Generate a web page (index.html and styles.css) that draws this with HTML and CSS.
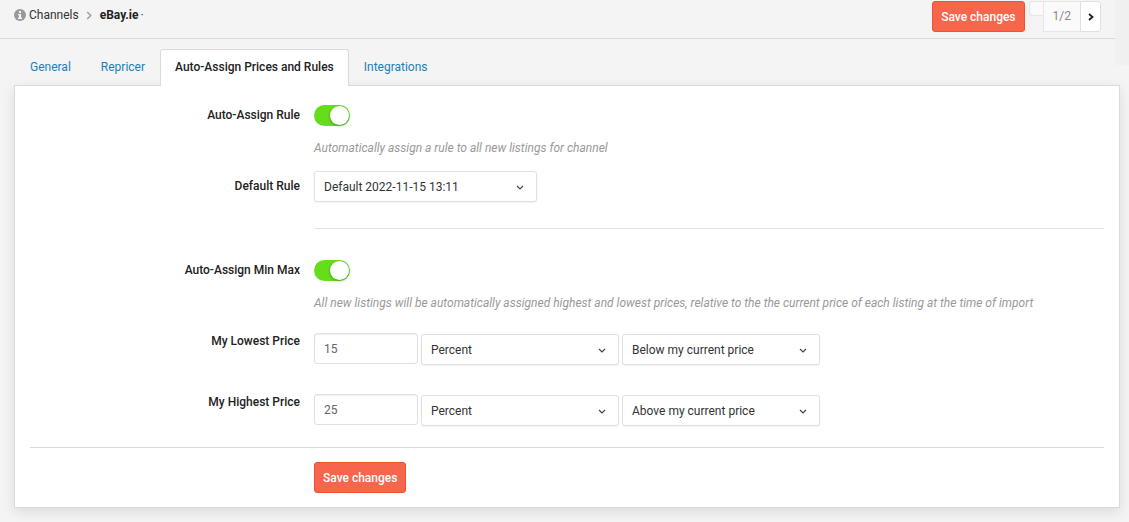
FILE: index.html
```html
<!DOCTYPE html>
<html lang="en">
<head>
  <meta charset="UTF-8">
  <meta name="viewport" content="width=device-width, initial-scale=1">
  <title>eBay.ie - Channels</title>
  <link rel="stylesheet" href="styles.css">
</head>
<body>

  <header class="topbar">
    <nav class="breadcrumb" aria-label="Breadcrumb">
      <svg class="info-icon" viewBox="0 0 12 12" aria-hidden="true">
        <circle cx="6" cy="6" r="6" fill="#999"/>
        <path d="M5 2h2v2H5zM4 5h3v3.500h1V10H4V8.500h1V6.200H4z" fill="#f4f4f4"/>
      </svg>
      <a href="#">Channels</a>
      <svg class="crumb-arrow" viewBox="0 0 6 10" aria-hidden="true">
        <path d="M1 1l4 4-4 4" fill="none" stroke="#999" stroke-width="1.500"/>
      </svg>
      <strong>eBay.ie</strong>
      <span class="dot">·</span>
    </nav>

    <div class="actions">
      <button class="btn" type="submit" form="settings">Save changes</button>
      <div class="pager">
        <button class="pager-prev" type="button" aria-label="Previous" disabled></button>
        <span class="pager-count">1/2</span>
        <button class="pager-next" type="button" aria-label="Next">
          <svg viewBox="0 0 6 8" aria-hidden="true">
            <path d="M1 1l3.500 3L1 7" fill="none" stroke="#222" stroke-width="1.800"/>
          </svg>
        </button>
      </div>
    </div>
    <div class="edge"></div>
  </header>

  <nav class="tabs">
    <a href="#">General</a>
    <a href="#">Repricer</a>
    <a class="active" href="#">Auto-Assign Prices and Rules</a>
    <a href="#">Integrations</a>
  </nav>

  <form class="panel" id="settings">

    <div class="row">
      <label for="assignRule">Auto-Assign Rule</label>
      <div>
        <input class="toggle" type="checkbox" id="assignRule" checked>
        <p class="hint">Automatically assign a rule to all new listings for channel</p>
      </div>
    </div>

    <div class="row row-rule">
      <label for="defaultRule">Default Rule</label>
      <div class="controls">
        <div class="select select-wide">
          <select id="defaultRule">
            <option>Default 2022-11-15 13:11</option>
          </select>
          <svg viewBox="0 0 8 6" aria-hidden="true"><path d="M1 1l3 3 3-3"/></svg>
        </div>
      </div>
    </div>

    <div class="row">
      <hr class="divider">
    </div>

    <div class="row">
      <label for="assignMinMax">Auto-Assign Min Max</label>
      <div>
        <input class="toggle" type="checkbox" id="assignMinMax" checked>
        <p class="hint">All new listings will be automatically assigned highest and lowest prices, relative to the the current price of each listing at the time of import</p>
      </div>
    </div>

    <div class="prices">
      <div class="row">
        <label for="lowest">My Lowest Price</label>
        <div class="controls">
          <input class="number" type="text" id="lowest" value="15">
          <div class="select">
            <select aria-label="Lowest price unit">
              <option>Percent</option>
            </select>
            <svg viewBox="0 0 8 6" aria-hidden="true"><path d="M1 1l3 3 3-3"/></svg>
          </div>
          <div class="select">
            <select aria-label="Lowest price direction">
              <option>Below my current price</option>
            </select>
            <svg viewBox="0 0 8 6" aria-hidden="true"><path d="M1 1l3 3 3-3"/></svg>
          </div>
        </div>
      </div>

      <div class="row">
        <label for="highest">My Highest Price</label>
        <div class="controls">
          <input class="number" type="text" id="highest" value="25">
          <div class="select">
            <select aria-label="Highest price unit">
              <option>Percent</option>
            </select>
            <svg viewBox="0 0 8 6" aria-hidden="true"><path d="M1 1l3 3 3-3"/></svg>
          </div>
          <div class="select">
            <select aria-label="Highest price direction">
              <option>Above my current price</option>
            </select>
            <svg viewBox="0 0 8 6" aria-hidden="true"><path d="M1 1l3 3 3-3"/></svg>
          </div>
        </div>
      </div>
    </div>

    <div class="row footer">
      <button class="btn" type="submit">Save changes</button>
    </div>

  </form>

</body>
</html>
```

FILE: styles.css
```css
* { box-sizing: border-box; }
body {
  margin: 0;
  background: #f4f4f4;
  color: #333;
  font-family: Roboto, sans-serif;
  font-size: 12px;
  line-height: 16px;
}
a {
  color: #1f7fb8;
  text-decoration: none;
}
button, input, select {
  font: inherit;
}
svg {
  display: block;
  flex: none;
}

/* top bar */
.topbar {
  position: relative;
  display: flex;
  justify-content: space-between;
  align-items: flex-start;
  height: 39px;
  padding: 1px 28px 0 14px;
  border-bottom: 1px solid #dadada;
}
.breadcrumb {
  display: flex;
  align-items: center;
  padding-top: 6px;
}
.breadcrumb a {
  color: #333;
}
.breadcrumb strong {
  font-weight: 700;
  color: #222;
}
.info-icon {
  width: 12px;
  height: 12px;
  margin-right: 3px;
}
.crumb-arrow {
  width: 6px;
  height: 9px;
  margin: 0 8px 0 7px;
}
.dot {
  margin-left: 2px;
}
.actions {
  display: flex;
  gap: 4px;
}
.btn {
  height: 31px;
  padding: 0 8px;
  background: #f5664d;
  color: #fff;
  font-weight: 500;
  border: 1px solid #f4512f;
  border-radius: 3px;
  cursor: pointer;
}
.pager {
  display: flex;
  align-items: flex-start;
}
.pager-prev {
  width: 14px;
  height: 15px;
  padding: 0;
  background: #fafafa;
  border: 1px solid #e6e6e6;
  border-right: 0;
  border-radius: 3px 0 0 3px;
}
.pager-count {
  height: 31px;
  padding: 6px 9px;
  background: #fafafa;
  color: #888;
  border: 1px solid #e6e6e6;
  border-right: 0;
}
.pager-next {
  display: flex;
  align-items: center;
  justify-content: center;
  width: 21px;
  height: 31px;
  padding: 0;
  background: #fff;
  border: 1px solid #e0e0e0;
  border-radius: 0 3px 3px 0;
}
.pager-next svg {
  width: 6px;
  height: 8px;
}
.edge {
  position: absolute;
  top: 0;
  right: 0;
  width: 14px;
  height: 65px;
  background: #f0f0f0;
}

/* tabs */
.tabs {
  display: flex;
  padding: 10px 15px 0;
}
.tabs a {
  height: 37px;
  padding: 9px 14px;
  border: 1px solid transparent;
  border-bottom: 0;
}
.tabs .active {
  z-index: 1;
  background: #fff;
  color: #222;
  font-weight: 500;
  border-color: #dadada;
  border-radius: 3px 3px 0 0;
}

/* settings panel */
.panel {
  margin: -1px 9px 14px 14px;
  padding: 19px 15px 14px;
  background: #fff;
  border: 1px solid #dadada;
  box-shadow: 0 4px 12px rgba(0, 0, 0, 0.1);
}
.row {
  display: grid;
  grid-template-columns: 270px 1fr;
  column-gap: 14px;
}
.row label {
  padding-top: 2px;
  text-align: right;
  font-weight: 500;
  color: #222;
}
.row-rule label {
  padding-top: 7px;
}
.toggle {
  display: block;
  appearance: none;
  width: 36px;
  height: 21px;
  margin: 0;
  padding: 1px;
  background: #ccc;
  border-radius: 11px;
  cursor: pointer;
}
.toggle::before {
  content: "";
  display: block;
  width: 19px;
  height: 19px;
  background: #fff;
  border-radius: 50%;
  box-shadow: 0 1px 3px rgba(0, 0, 0, 0.3);
}
.toggle:checked {
  background: #65dd1b;
}
.toggle:checked::before {
  margin-left: auto;
}
.hint {
  margin: 14px 0 15px;
  color: #999;
  font-style: italic;
}
.controls {
  display: flex;
  gap: 3px;
}
.controls .number {
  width: 104px;
  height: 31px;
  padding: 0 9px;
  color: #666;
  border: 1px solid #e0e0e0;
  border-radius: 3px;
  box-shadow: inset 0 1px 1px rgba(0, 0, 0, 0.06);
}
.select {
  position: relative;
  width: 198px;
}
.select-wide {
  width: 223px;
}
.select select {
  display: block;
  appearance: none;
  width: 100%;
  height: 31px;
  padding: 0 24px 0 9px;
  background: #fff;
  color: #333;
  border: 1px solid #e0e0e0;
  border-radius: 3px;
  box-shadow: 0 1px 2px rgba(0, 0, 0, 0.06);
}
.select svg {
  position: absolute;
  top: 14px;
  right: 13px;
  width: 8px;
  height: 6px;
  fill: none;
  stroke: #444;
  stroke-width: 1.2;
  pointer-events: none;
}
.divider {
  grid-column: 2;
  width: 100%;
  margin: 26px 0 31px;
  border: 0;
  border-top: 1px solid #e4e4e4;
}
.prices {
  display: grid;
  gap: 29px;
  padding: 7px 0 21px;
}
.prices label {
  padding-top: 0;
}
.prices .select {
  margin-top: 1px;
}
.footer {
  padding-top: 14px;
  border-top: 1px solid #dadada;
}
.footer .btn {
  grid-column: 2;
  justify-self: start;
}
```
